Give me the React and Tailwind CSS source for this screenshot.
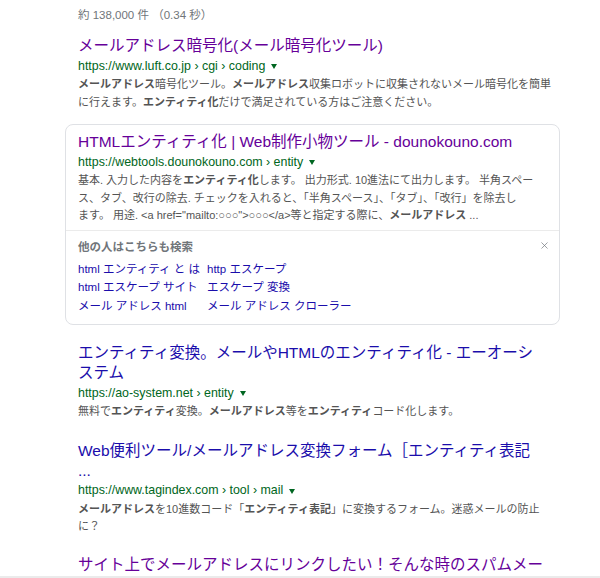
import { X } from 'lucide-react';

const font = "font-['Liberation_Sans','Noto_Sans_CJK_JP',sans-serif]";

function Cite({ children }) {
  return (
    <div className="flex items-center h-[20px] text-[12.4px] text-[#006621] whitespace-nowrap">
      <span>{children}</span>
      <span className="ml-[6px] mt-[1px] w-0 h-0 border-l-[3.5px] border-r-[3.5px] border-t-[5px] border-l-transparent border-r-transparent border-t-[#006621]" />
    </div>
  );
}

function Title({ visited, children }) {
  return (
    <div
      className={`text-[15.5px] leading-[20px] whitespace-nowrap ${
        visited ? 'text-[#660099]' : 'text-[#1a0dab]'
      }`}
    >
      {children}
    </div>
  );
}

function Snippet({ lines }) {
  return (
    <div className="text-[11px] leading-[17.5px] text-[#545454] whitespace-nowrap">
      {lines.map((line, i) => (
        <div key={i}>{line}</div>
      ))}
    </div>
  );
}

const related = [
  'html エンティティ と は',
  'http エスケープ',
  'html エスケープ サイト',
  'エスケープ 変換',
  'メール アドレス html',
  'メール アドレス クローラー',
];

export default function App() {
  return (
    <div className={`${font} bg-white h-[578px] overflow-hidden border-b-2 border-[#ebebeb]`}>
      <div className="pl-[78px] pt-[7px] w-[560px]">
        <div className="text-[11.5px] leading-[16px] text-[#70757a]">約 138,000 件 （0.34 秒）</div>

        <div className="mt-[13px]">
          <Title visited>メールアドレス暗号化(メール暗号化ツール)</Title>
          <Cite>https://www.luft.co.jp › cgi › coding</Cite>
          <Snippet
            lines={[
              <>
                <b>メールアドレス</b>暗号化ツール。<b>メールアドレス</b>収集ロボットに収集されないメール暗号化を簡単
              </>,
              <>
                に行えます。<b>エンティティ化</b>だけで満足されている方はご注意ください。
              </>,
            ]}
          />
        </div>

        <div className="-ml-[13px] mt-[13px] w-[495px] border border-[#dfe1e5] rounded-[8px]">
          <div className="pl-[12px] pt-[7px] pb-[5px]">
            <Title visited>HTMLエンティティ化 | Web制作小物ツール - dounokouno.com</Title>
            <Cite>https://webtools.dounokouno.com › entity</Cite>
            <Snippet
              lines={[
                <>
                  基本. 入力した内容を<b>エンティティ化</b>します。 出力形式. 10進法にて出力します。 半角スペー
                </>,
                <>ス、タブ、改行の除去. チェックを入れると、「半角スペース」、「タブ」、「改行」を除去し</>,
                <>
                  ます。 用途. &lt;a href="mailto:○○○"&gt;○○○&lt;/a&gt;等と指定する際に、<b>メールアドレス</b> ...
                </>,
              ]}
            />
          </div>
          <div className="border-t border-[#ebebeb] pl-[12px] pr-[9px] pt-[8px] pb-[9px]">
            <div className="flex items-center justify-between h-[18px]">
              <span className="text-[11.5px] font-bold text-[#70757a]">他の人はこちらも検索</span>
              <X className="w-[11px] h-[11px] text-[#70757a] -mt-[4px]" strokeWidth={1.5} />
            </div>
            <div className="mt-[3px] grid grid-cols-[129px_auto] text-[11.5px] leading-[18.5px] text-[#1a0dab]">
              {related.map((r) => (
                <div key={r}>{r}</div>
              ))}
            </div>
          </div>
        </div>

        <div className="mt-[18px]">
          <Title>
            エンティティ変換。メールやHTMLのエンティティ化 - エーオーシ
            <br />
            ステム
          </Title>
          <Cite>https://ao-system.net › entity</Cite>
          <Snippet
            lines={[
              <>
                無料で<b>エンティティ</b>変換。<b>メールアドレス</b>等を<b>エンティティ</b>コード化します。
              </>,
            ]}
          />
        </div>

        <div className="mt-[20px]">
          <Title>
            Web便利ツール/メールアドレス変換フォーム［エンティティ表記
            <br />
            ...
          </Title>
          <Cite>https://www.tagindex.com › tool › mail</Cite>
          <Snippet
            lines={[
              <>
                <b>メールアドレス</b>を10進数コード「<b>エンティティ表記</b>」に変換するフォーム。迷惑メールの防止
              </>,
              <>に？</>,
            ]}
          />
        </div>

        <div className="mt-[19px]">
          <Title visited>サイト上でメールアドレスにリンクしたい！そんな時のスパムメー</Title>
        </div>
      </div>
    </div>
  );
}
